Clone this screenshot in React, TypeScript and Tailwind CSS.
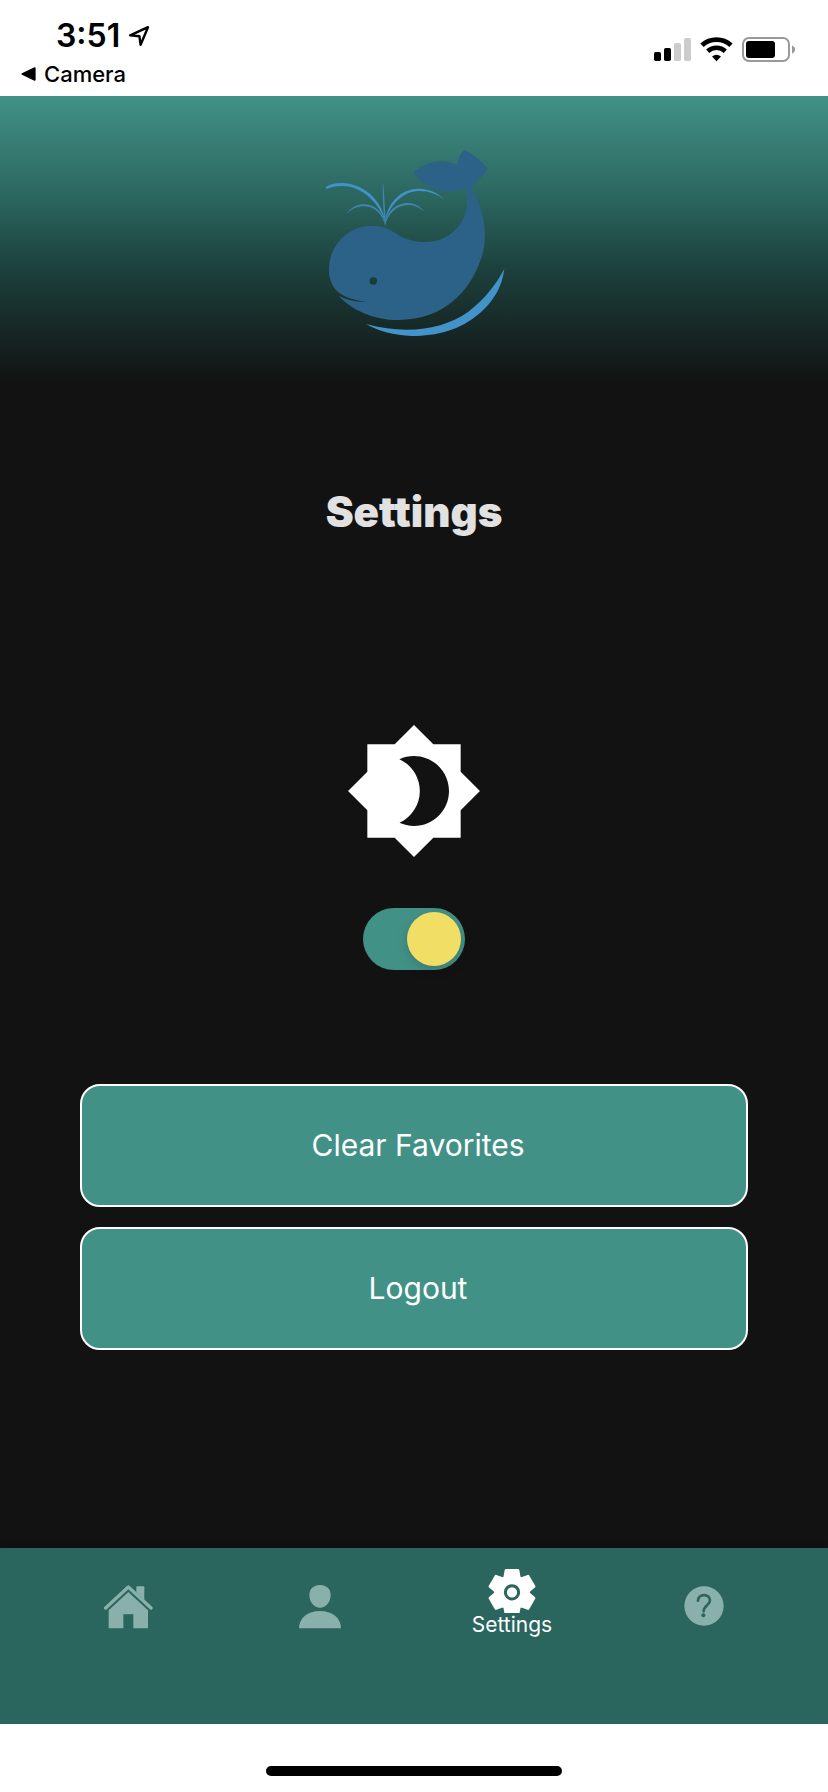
import React from "react";
import { MdBrightness4 } from "react-icons/md";

function StatusBar() {
  return (
    <div className="flex h-24 shrink-0 justify-between bg-white text-black">
      <div className="flex flex-col gap-1 pt-4">
        <div className="flex items-center gap-2 pl-14">
          <span className="text-[32px] leading-10 font-semibold">3:51</span>
          <svg viewBox="0 0 22 22" className="size-[22px]" fill="none" stroke="currentColor" strokeWidth="2.4" strokeLinejoin="round">
            <path d="M2.2 10.3 20 2.2 12.6 19.8 11.4 11.2Z" />
          </svg>
        </div>
        <a href="#camera" className="flex items-center gap-2 pl-[21px] text-[22px] leading-7 font-medium">
          <svg viewBox="0 0 15 14" className="h-3.5 w-[15px]" fill="currentColor">
            <path d="M1 6.2 13.4.3Q14.6 0 14.6 1.2V12.8Q14.6 14 13.4 13.7L1 7.8Q-.3 7 1 6.2Z" />
          </svg>
          Camera
        </a>
      </div>
      <div className="flex items-start gap-2 pt-9 pr-8">
        <svg viewBox="0 0 38 27" className="h-[27px] w-[38px]">
          <rect x="0" y="16" width="7" height="9" rx="1.8" fill="#000" />
          <rect x="10" y="12" width="7" height="13" rx="1.8" fill="#000" />
          <rect x="20" y="7" width="7" height="18" rx="1.8" fill="#ccc" />
          <rect x="30" y="2" width="7" height="23" rx="1.8" fill="#ccc" />
        </svg>
        <svg viewBox="0 0 34 27" className="h-[27px] w-[34px]" fill="none" stroke="#000">
          <path d="M2 9.2A21.5 21.5 0 0 1 31 9.2" strokeWidth="4.8" />
          <path d="M7.7 15.2A13 13 0 0 1 25.3 15.2" strokeWidth="4.6" />
          <path d="M12 20.6Q16.5 17 21 20.6L16.5 25.2Z" fill="#000" stroke="none" />
        </svg>
        <svg viewBox="0 0 54 27" className="h-[27px] w-[54px]">
          <rect x="1" y="2" width="46" height="23" rx="6" fill="none" stroke="#999" strokeWidth="2" />
          <rect x="4" y="5" width="29" height="17" rx="3" fill="#000" />
          <path d="M50 9.5Q53 10.500 53 13.500T50 17.500Z" fill="#999" />
        </svg>
      </div>
    </div>
  );
}

function WhaleLogo() {
  return (
    <svg viewBox="0 0 624 630" className="h-[210px] w-[208px]" role="img" aria-label="Whale">
      <g fill="#2d6288">
        <path
          fillRule="evenodd"
          d="M75 462C60 442 55 420 57 395C62 325 118 273 185 272C240 273 255 298 285 310C320 325 370 325 403 308C452 284 475 235 471 190L469 155H480C527 222 538 315 508 385C478 465 405 555 265 555C190 555 125 525 86 482C110 495 140 501 168 500C130 496 95 485 75 462ZM179 438a11 11 0 1 0 22 0a11 11 0 1 0 -22 0Z"
        />
        <path d="M310 113C350 76 405 70 443 91C442 72 452 54 464 44C490 58 515 78 533 101C518 124 500 143 482 156C425 180 355 174 310 113Z" />
      </g>
      <g fill="#4393cb">
        <path d="M168 567C295 602 405 580 475 530C525 492 560 445 583 401C577 455 550 498 510 534C450 586 380 603 305 603C250 600 210 590 168 567Z" />
        <path d="M47 157C60 146 80 143 100 144C168 147 221 205 226 264C214 213 160 153 100 153C80 152 65 155 50 162Z" />
        <path d="M225 264C228 210 270 161 325 161C365 162 390 178 406 198C385 178 360 168 325 168C280 168 236 212 225 264Z" />
      </g>
      <g fill="#3f86b0">
        <path d="M109 237C125 214 145 207 165 208C197 210 221 232 226 272C215 236 195 216 165 214C145 213 128 219 109 237Z" />
        <path d="M225 272C228 232 255 204 294 204C315 205 332 215 342 230C326 215 310 210 294 210C260 210 234 236 225 272Z" />
        <path d="M219 140C222 160 223 200 228 260L225 273C220 230 217 180 219 140Z" />
      </g>
    </svg>
  );
}

function HomeIcon() {
  return (
    <svg viewBox="125 158 150 135" className="h-[45px] w-[50px]" fill="currentColor">
      <path d="M133 230 201 167 269 230" fill="none" stroke="currentColor" strokeWidth="10" strokeLinecap="round" strokeLinejoin="round" />
      <path d="M225 182V168Q225 165 228 165H246Q249 165 249 168V206Z" />
      <path d="M201 182 260 237V291H216V249H186V291H142V237Z" />
    </svg>
  );
}

function PersonIcon() {
  return (
    <svg viewBox="711 158 132 135" className="h-[45px] w-11" fill="currentColor">
      <path d="M777 161C797 161 809 174 809 191C809 212 795 229 777 229S745 212 745 191C745 174 757 161 777 161Z" />
      <path d="M714 291C714 260 740 239 777 239S840 260 840 291Z" />
    </svg>
  );
}

function GearIcon() {
  const tooth = "M-18 -66H18L22 -44V44L18 66H-18L-22 44V-44Z";
  return (
    <svg viewBox="-72 -70 144 132" className="h-11 w-12" fill="currentColor">
      <circle r="53" />
      <g stroke="currentColor" strokeWidth="8" strokeLinejoin="round">
        <path d={tooth} />
        <path d={tooth} transform="rotate(60)" />
        <path d={tooth} transform="rotate(120)" />
      </g>
      <circle r="20" fill="none" stroke="#2a655e" strokeWidth="9" />
    </svg>
  );
}

function HelpIcon() {
  return (
    <svg viewBox="0 0 120 120" className="size-10">
      <circle cx="60" cy="60" r="59" fill="currentColor" />
      <path d="M42 44C42 22 78 22 78 43C78 58 59 58 59 76" fill="none" stroke="#2a655e" strokeWidth="8" strokeLinecap="round" />
      <circle cx="58" cy="88" r="6" fill="#2a655e" />
    </svg>
  );
}

const tabs = [
  { name: "Home", Icon: HomeIcon },
  { name: "Profile", Icon: PersonIcon },
  { name: "Settings", Icon: GearIcon },
  { name: "Help", Icon: HelpIcon },
];

function TabBar({ active }: { active: string }) {
  return (
    <nav className="h-44 shrink-0 bg-[#2a655e] pr-7 pl-8 shadow-[0_0_8px_rgba(0,0,0,0.3)]">
      <ul className="grid h-28 grid-cols-4">
        {tabs.map(({ name, Icon }) => (
          <li key={name} className="flex">
            <a
              href={"#" + name.toLowerCase()}
              aria-label={name}
              className={
                "flex flex-1 flex-col items-center justify-center " +
                (name === active ? "pb-0.5 text-white" : "pt-1 text-[#8ab0ac]")
              }
            >
              <Icon />
              {name === active && <span className="text-[21px] leading-6">{name}</span>}
            </a>
          </li>
        ))}
      </ul>
    </nav>
  );
}

const actionButton =
  "h-[123px] rounded-[20px] border-2 border-white bg-[#429187] pl-2 text-[30px] text-white";

export default function App() {
  return (
    <div className="flex min-h-screen flex-col bg-white font-['Inter','Liberation_Sans',sans-serif]">
      <StatusBar />
      <main className="flex flex-1 flex-col items-center bg-[#121212]">
        <header className="flex h-72 w-full justify-center bg-[linear-gradient(to_bottom,#429187_0%,#2b665f_35%,#1c3f3b_61%,#121212_100%)] pt-[39px]">
          <WhaleLogo />
        </header>
        <h1 className="mt-[104px] text-[42px] leading-[48px] font-black text-[#e1e1e1]">Settings</h1>
        <MdBrightness4 className="mt-[185px] size-[140px] text-white" />
        <input
          type="checkbox"
          role="switch"
          aria-label="Dark mode"
          defaultChecked
          className="mt-[47px] h-[62px] w-[102px] appearance-none rounded-full bg-[#4b5563] p-1 before:block before:size-[54px] before:rounded-full before:bg-[#f0de65] before:shadow-[0_4px_12px_rgba(0,0,0,0.15)] before:transition-transform checked:bg-[#429187] checked:before:translate-x-10"
        />
        <div className="mt-[114px] flex w-full flex-col gap-5 px-20">
          <button type="button" className={actionButton}>
            Clear Favorites
          </button>
          <button type="button" className={actionButton}>
            Logout
          </button>
        </div>
      </main>
      <TabBar active="Settings" />
      <div className="flex h-[68px] shrink-0 items-end justify-center bg-white pb-4">
        <div className="h-2.5 w-[296px] rounded-full bg-black" />
      </div>
    </div>
  );
}
